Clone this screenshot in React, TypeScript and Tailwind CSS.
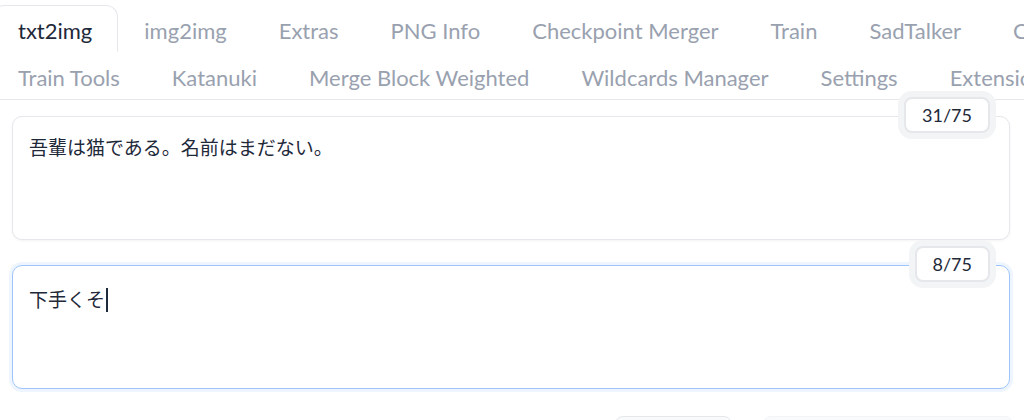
const topTabs = ["txt2img", "img2img", "Extras", "PNG Info", "Checkpoint Merger", "Train", "SadTalker", "Civitai Helper"];
const bottomTabs = ["Train Tools", "Katanuki", "Merge Block Weighted", "Wildcards Manager", "Settings", "Extensions"];

function Tab({ label, active }: { label: string; active?: boolean }) {
  return (
    <button
      className={
        "shrink-0 whitespace-nowrap px-[25px] pt-[9px] pb-[5px] text-[22px] leading-[31px] border rounded-t-xl " +
        (active ? "border-gray-200 border-b-transparent bg-white text-gray-800" : "border-transparent text-gray-400")
      }
    >
      {label}
    </button>
  );
}

function Counter({ value }: { value: string }) {
  return (
    <div className="absolute right-5 top-[-19px] flex h-[36px] items-center rounded-lg border-2 border-gray-200 bg-white px-4 text-[18px] text-gray-800 shadow-[0_0_0_6px_#f3f4f6]">
      {value}
    </div>
  );
}

function Prompt({ text, value, focused }: { text: string; value: string; focused?: boolean }) {
  return (
    <div className="relative ml-3 mr-[14px]">
      <div
        className={
          "h-[124px] rounded-[10px] border bg-white px-4 pt-[17px] text-[19px] leading-[28px] text-gray-800 " +
          (focused
            ? "border-[#9ec5fb] shadow-[0_0_0_3px_#eef5ff]"
            : "border-gray-200 shadow-[0_1px_3px_rgba(0,0,0,0.05)]")
        }
      >
        {text}
        {focused && <span className="ml-[1px] inline-block h-[24px] w-[1.5px] translate-y-[5px] bg-gray-800" />}
      </div>
      <Counter value={value} />
    </div>
  );
}

export default function App() {
  return (
    <div
      className="h-[420px] w-[1024px] overflow-hidden bg-white"
      style={{ fontFamily: 'Lato, "Noto Sans CJK JP", sans-serif' }}
    >
      <nav className="border-b border-gray-200 pt-[5px]">
        <div className="ml-[-8px] flex">
          {topTabs.map((t, i) => (
            <Tab key={t} label={t} active={i === 0} />
          ))}
        </div>
        <div className="ml-[-8px] flex">
          {bottomTabs.map((t) => (
            <Tab key={t} label={t} />
          ))}
        </div>
      </nav>

      <div className="mt-4 flex flex-col gap-[25px]">
        <Prompt text="吾輩は猫である。名前はまだない。" value="31/75" />
        <Prompt text="下手くそ" value="8/75" focused />
      </div>

      <div className="mt-[27px] flex gap-[31px] pl-[615px]">
        <div className="h-10 w-[117px] shrink-0 rounded-lg border border-gray-200 bg-gray-50" />
        <div className="h-10 w-[250px] shrink-0 rounded-lg border border-gray-100 bg-gray-50" />
      </div>
    </div>
  );
}
